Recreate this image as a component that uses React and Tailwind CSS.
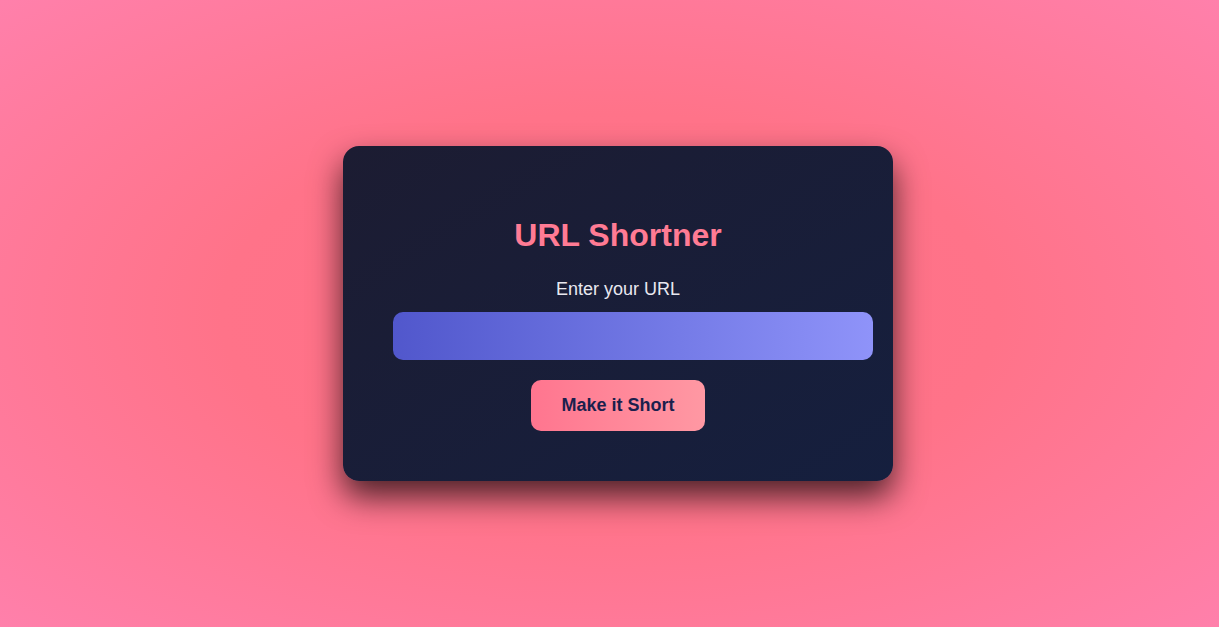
export default function App() {
  return (
    <div
      className="w-full h-[627px] flex items-center justify-center pl-[17px] bg-[radial-gradient(ellipse_at_center,#ff6f86_0%,#ff7389_45%,#ff80ab_100%)]"
      style={{ fontFamily: '"Liberation Sans", Arial, sans-serif' }}
    >
      <div className="w-[550px] h-[335px] rounded-[16px] bg-gradient-to-br from-[#1c1c32] to-[#151f3e] shadow-[0_16px_32px_rgba(0,0,0,0.7)] px-[50px] pt-[50px] pb-[50px] flex flex-col">
        <h1 className="mt-[21px] mb-[25px] text-center text-[32px] leading-[37px] font-bold text-[#ff7b94]">
          URL Shortner
        </h1>
        <label className="block text-center text-[18px] leading-[21px] text-[#e8e8f0]">
          Enter your URL
        </label>
        <input
          type="text"
          className="mt-[12px] w-[480px] h-[48px] shrink-0 rounded-[10px] bg-gradient-to-r from-[#5157cc] to-[#8f93f9] outline-none border-0 px-[15px] text-white"
        />
        <div className="flex justify-center mt-[20px]">
          <button className="w-[174px] h-[51px] rounded-[10px] bg-gradient-to-r from-[#ff758f] to-[#ff98a3] text-[18px] font-bold text-[#1b1f4d]">
            Make it Short
          </button>
        </div>
      </div>
    </div>
  );
}
